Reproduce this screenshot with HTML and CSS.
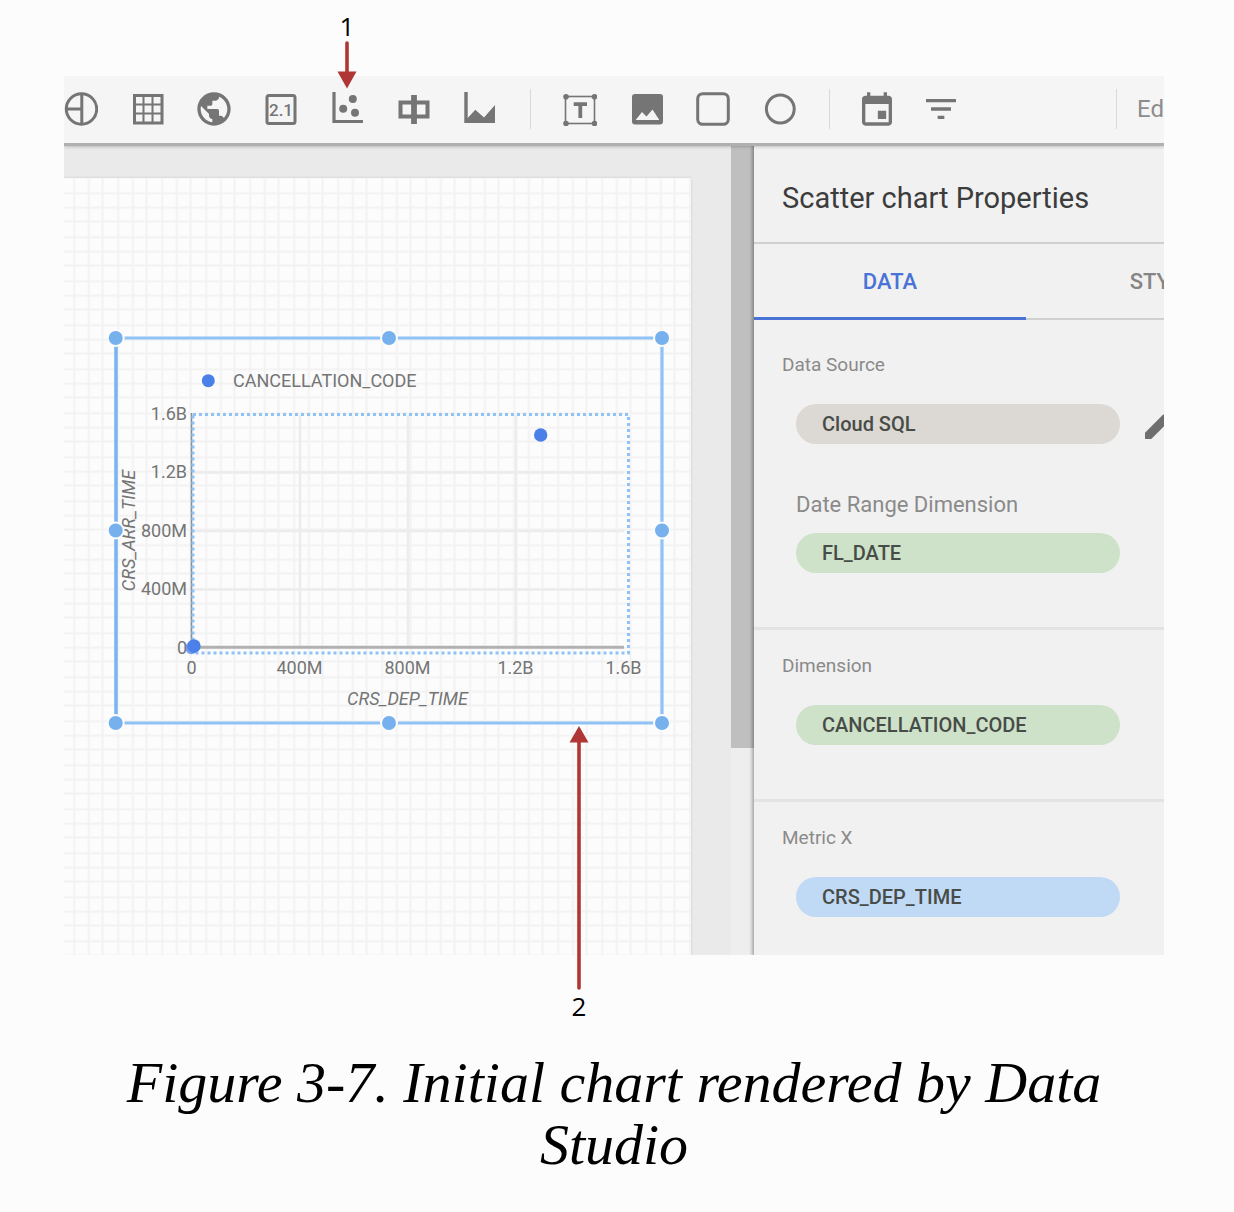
FILE: index.html
```html
<!DOCTYPE html>
<html lang="en">
<head>
<meta charset="utf-8">
<meta name="viewport" content="width=device-width, initial-scale=1">
<title>Figure 3-7. Initial chart rendered by Data Studio</title>
<link rel="stylesheet" href="styles.css">
</head>
<body>
<figure class="figure">
  <div class="app">
    <div class="toolbar" role="toolbar" aria-label="Insert">
      <div class="tools tools-charts">
        <button class="tool" type="button" aria-label="Pie chart"><svg viewBox="0 0 34 34"><g fill="none" stroke="currentColor" stroke-width="3"><circle cx="17.500" cy="17" r="15.200"/><path d="M17.800 2v30M3 17h14.500"/></g></svg></button>
        <button class="tool" type="button" aria-label="Table"><svg viewBox="0 0 34 34"><rect x="3.500" y="3.500" width="27.500" height="27.500" fill="none" stroke="currentColor" stroke-width="3"/><path d="M12.500 3v28M21.500 3v28M3 12.500h28M3 21.500h28" stroke="currentColor" stroke-width="2"/></svg></button>
        <button class="tool" type="button" aria-label="Geo map"><svg viewBox="1.800 1.800 20.400 20.400"><path fill="currentColor" d="M12 2C6.480 2 2 6.480 2 12s4.480 10 10 10 10-4.480 10-10S17.520 2 12 2zm-1 17.930c-3.950-.49-7-3.850-7-7.930 0-.62.08-1.210.21-1.790L9 15v1c0 1.100.9 2 2 2v1.930zm6.900-2.540c-.26-.81-1-1.390-1.900-1.390h-1v-3c0-.55-.45-1-1-1H8v-2h2c.55 0 1-.45 1-1V7h2c1.100 0 2-.9 2-2v-.41c2.930 1.190 5 4.060 5 7.410 0 2.080-.8 3.970-2.100 5.390z"/></svg></button>
        <button class="tool" type="button" aria-label="Scorecard"><svg viewBox="0 0 34 34"><rect x="3" y="3.500" width="28" height="28" rx="2" fill="none" stroke="currentColor" stroke-width="3"/><text class="score" x="17" y="24" text-anchor="middle">2.1</text></svg></button>
        <button class="tool" type="button" aria-label="Scatter chart"><svg viewBox="0 0 34 34"><path d="M4 0v29.500h29" fill="none" stroke="currentColor" stroke-width="3.200"/><g fill="currentColor"><circle cx="22.800" cy="7" r="4"/><circle cx="13.200" cy="16.800" r="4"/><circle cx="25" cy="20.800" r="4"/></g></svg></button>
        <button class="tool" type="button" aria-label="Bullet chart"><svg viewBox="0 0 34 34"><rect x="3.500" y="10.500" width="27" height="14" fill="none" stroke="currentColor" stroke-width="4"/><path d="M17 3v29" stroke="currentColor" stroke-width="5.800"/></svg></button>
        <button class="tool" type="button" aria-label="Area chart"><svg viewBox="0 0 34 34"><path fill="currentColor" d="M1.300 0h3.400v26l7.600-8.200 8.700 7.600L32 13v18H1.300z"/></svg></button>
      </div>
      <span class="divider"></span>
      <div class="tools tools-shapes">
        <button class="tool" type="button" aria-label="Text"><svg viewBox="0 0 34 34"><rect x="2.500" y="4.500" width="29" height="27" fill="none" stroke="currentColor" stroke-width="1.600"/><g fill="currentColor"><circle cx="3" cy="4.700" r="2.800"/><circle cx="31.500" cy="4.700" r="2.800"/><circle cx="3" cy="31.500" r="2.800"/><circle cx="31.500" cy="31.500" r="2.800"/></g><path d="M10.700 12.200H24M17.300 11v15" fill="none" stroke="currentColor" stroke-width="3.800"/></svg></button>
        <button class="tool" type="button" aria-label="Image"><svg viewBox="0 0 34 34"><path fill="currentColor" fill-rule="evenodd" d="M5 2h25q3 0 3 3v24.500q0 3-3 3H5q-3 0-3-3V5q0-3 3-3zM5.700 28H29.300L22.500 17.500 16.500 24.500 12 20z"/></svg></button>
        <button class="tool" type="button" aria-label="Rectangle"><svg viewBox="0 0 34 34"><rect x="1.700" y="1.700" width="30.600" height="30.600" rx="5" fill="none" stroke="currentColor" stroke-width="3"/></svg></button>
        <button class="tool" type="button" aria-label="Circle"><svg viewBox="0 0 34 34"><circle cx="17.300" cy="17" r="13.900" fill="none" stroke="currentColor" stroke-width="3"/></svg></button>
      </div>
      <span class="divider"></span>
      <div class="tools tools-filters">
        <button class="tool" type="button" aria-label="Date range"><svg viewBox="1.800 .8 20.400 20.400"><path fill="currentColor" d="M17.500 12h-5v5h5v-5zM16 1v2H8V1H6v2H5c-1.110 0-1.990.9-1.990 2L3 19c0 1.100.89 2 2 2h14c1.100 0 2-.9 2-2V5c0-1.100-.9-2-2-2h-1V1h-2zm3 18H5V8h14v11z"/></svg></button>
        <button class="tool" type="button" aria-label="Filter control"><svg viewBox="1.800 1.800 20.400 20.400"><path fill="currentColor" d="M10 18h4v-2h-4v2zM3 6v2h18V6H3zm3 7h12v-2H6v2z"/></svg></button>
      </div>
      <span class="divider divider-end"></span>
      <button class="edit-link" type="button">Edit</button>
    </div>

    <div class="workspace">
      <div class="canvas">
        <div class="sheet">
          <svg class="sheet-grid" aria-hidden="true">
            <defs><pattern id="grid" x="-4.500" y="0.500" width="44" height="44" patternUnits="userSpaceOnUse"><path d="M14.670 0v44M29.330 0v44M43 0v44M0 14.670h44M0 29.330h44M0 43h44" fill="none" stroke="#f2f2f2" stroke-width="2"/></pattern></defs>
            <rect width="100%" height="100%" fill="url(#grid)"/>
          </svg>
          <svg class="chart" viewBox="108 330 562 402" role="img" aria-label="Scatter chart of CRS_DEP_TIME and CRS_ARR_TIME">
            <g stroke="#ececec" stroke-width="2.400"><path d="M300 415v232M408 415v232M516 415v232M192 472.500h432M192 531h432M192 589.500h432"/></g>
            <path d="M191.500 413v235" stroke="#858b91" stroke-width="1.600"/>
            <path d="M192 647.300h432" stroke="#b1b1b1" stroke-width="3"/>
            <rect class="plot-frame" x="193" y="414.500" width="435.500" height="238.500"/>
            <g class="tick tick-y"><text x="187" y="420">1.6B</text><text x="187" y="478">1.2B</text><text x="187" y="537">800M</text><text x="187" y="595">400M</text><text x="187" y="654">0</text></g>
            <g class="tick tick-x"><text x="191.500" y="674">0</text><text x="299.500" y="674">400M</text><text x="407.500" y="674">800M</text><text x="515.500" y="674">1.2B</text><text x="623.500" y="674">1.6B</text></g>
            <text class="tick" x="233" y="387">CANCELLATION_CODE</text>
            <text class="tick axis" x="407.500" y="705">CRS_DEP_TIME</text>
            <text class="tick axis" transform="translate(135 530.500) rotate(-90)">CRS_ARR_TIME</text>
            <g fill="#4c80e9"><circle cx="208.300" cy="380.700" r="6.500"/><circle cx="540.700" cy="435" r="6.700"/><circle cx="194" cy="646" r="6.700"/><circle cx="191.500" cy="648" r="6.200" opacity=".75"/></g>
            <path d="M116 338v385" stroke="#7bb4f0" stroke-width="3.600"/>
            <path d="M116 338h546M116 723h546M662 338v385" stroke="#8fc2f5" stroke-width="3.200"/>
            <g class="handles"><circle cx="115.700" cy="338" r="8"/><circle cx="389" cy="338" r="8"/><circle cx="662" cy="338" r="8"/><circle cx="115.700" cy="530.500" r="8"/><circle cx="662" cy="530.500" r="8"/><circle cx="115.700" cy="723" r="8"/><circle cx="389" cy="723" r="8"/><circle cx="662" cy="723" r="8"/></g>
          </svg>
        </div>
        <div class="scroll-track"><div class="scroll-thumb"></div></div>
      </div>

      <aside class="panel">
        <h2 class="panel-title">Scatter chart Properties</h2>
        <div class="tabs" role="tablist">
          <button class="tab tab-active" type="button" role="tab" aria-selected="true">DATA</button>
          <button class="tab" type="button" role="tab" aria-selected="false">STYLE</button>
        </div>
        <section class="section section-source">
          <h3 class="label">Data Source</h3>
          <div class="field">
            <button class="pill pill-source" type="button">Cloud SQL</button>
            <button class="pencil" type="button" aria-label="Edit data source"><svg viewBox="0 0 24 24"><path fill="currentColor" d="M3 17.250V21h3.750L17.810 9.940l-3.750-3.750L3 17.250zM20.710 7.040a1 1 0 0 0 0-1.410l-2.340-2.340a1 1 0 0 0-1.410 0l-1.830 1.830 3.750 3.750 1.830-1.830z"/></svg></button>
          </div>
          <h4 class="sublabel">Date Range Dimension</h4>
          <div class="field"><button class="pill pill-dimension" type="button">FL_DATE</button></div>
        </section>
        <section class="section">
          <h3 class="label">Dimension</h3>
          <div class="field"><button class="pill pill-dimension" type="button">CANCELLATION_CODE</button></div>
        </section>
        <section class="section section-last">
          <h3 class="label">Metric X</h3>
          <div class="field"><button class="pill pill-metric" type="button">CRS_DEP_TIME</button></div>
        </section>
      </aside>
    </div>
  </div>

  <div class="callout callout-toolbar">
    <span>1</span>
    <svg width="20" height="48" viewBox="0 0 20 48" aria-hidden="true"><path d="M10 2v30" stroke="#b03535" stroke-width="3.600" stroke-linecap="round"/><path d="M.5 30.500h19L10 47.500z" fill="#b03535"/></svg>
  </div>
  <div class="callout callout-chart">
    <svg width="20" height="265" viewBox="0 0 20 265" aria-hidden="true"><path d="M10 16v246" stroke="#b03535" stroke-width="3.600" stroke-linecap="round"/><path d="M.5 16.500h19L10 0z" fill="#b03535"/></svg>
    <span>2</span>
  </div>

  <figcaption class="caption">Figure 3-7. Initial chart rendered by Data Studio</figcaption>
</figure>
</body>
</html>
```
FILE: styles.css
```css
* { box-sizing: border-box; }

body {
  margin: 0;
  background: #fcfcfc;
  color: #000;
  font-family: Roboto, "Liberation Sans", sans-serif;
}

button {
  margin: 0;
  padding: 0;
  border: 0;
  background: none;
  font: inherit;
  color: inherit;
  cursor: pointer;
}

h2, h3, h4 { margin: 0; font-weight: 400; }

.figure {
  position: relative;
  margin: 0;
  padding: 76px 70px 32px 64px;
}

.app {
  display: flex;
  flex-direction: column;
  overflow: hidden;
  background: #eaeaea;
}

/* Toolbar */
.toolbar {
  position: relative;
  z-index: 1;
  display: flex;
  align-items: center;
  height: 70px;
  padding-bottom: 1px;
  background: #f5f5f5;
  border-bottom: 3px solid #b0b0b0;
  box-shadow: 0 1px 3px rgba(0, 0, 0, 0.2);
  color: #757575;
}

.tools { display: flex; flex: none; justify-content: space-between; }
.tools-charts { width: 433px; }
.tools-shapes { width: 234px; }
.tools-filters { width: 98px; }

.tool { width: 34px; height: 34px; }
.tool svg { display: block; width: 34px; height: 34px; }

.score {
  font: 500 17px Roboto, "Liberation Sans", sans-serif;
  fill: currentColor;
}

.divider {
  flex: none;
  width: 1px;
  height: 40px;
  margin: 0 32px 0 33px;
  background: #d9d9d9;
}

.tools-shapes + .divider { margin: 0 30px 0 32px; }
.divider-end { margin: 0 20px 0 auto; }

.edit-link {
  flex: none;
  width: 27px;
  overflow: hidden;
  text-align: left;
  font-size: 24px;
  line-height: 28px;
  color: #8c8c8c;
}

/* Workspace */
.workspace { display: flex; }

.canvas {
  flex: 1;
  min-width: 0;
  display: flex;
}

.sheet {
  position: relative;
  flex: 1;
  min-width: 0;
  margin: 32px 40px 0 0;
  overflow: hidden;
  background: #fcfcfc;
  box-shadow: 0 0 3px rgba(0, 0, 0, 0.12);
}

.sheet-grid { display: block; position: absolute; inset: 0; width: 100%; height: 100%; }

.chart {
  position: absolute;
  left: 44px;
  top: 152px;
  width: 562px;
  height: 402px;
}

.tick { font-size: 18px; fill: #757575; }
.tick-y { text-anchor: end; }
.tick-x { text-anchor: middle; }
.axis { font-style: italic; text-anchor: middle; }

.plot-frame {
  fill: none;
  stroke: #8fc3f6;
  stroke-width: 3;
  stroke-dasharray: 3 3;
}

.handles { fill: #76b0ed; stroke: #fcfcfc; stroke-width: 2; }

.scroll-track {
  flex: none;
  width: 23px;
  background: #eeeeee;
}

.scroll-thumb { height: 602px; background: #bfbfbf; }

/* Properties panel */
.panel {
  flex: none;
  width: 410px;
  overflow: hidden;
  background: #f1f1f1;
  box-shadow: -1px 0 3px 1px rgba(0, 0, 0, 0.3);
}

.panel-title {
  padding: 36px 28px 28px;
  border-bottom: 2px solid #cfcfcf;
  font-size: 29px;
  line-height: 32px;
  color: #3c3c3c;
}

.tabs { display: flex; border-bottom: 2px solid #d0d0d0; }

.tab {
  flex: none;
  width: 272px;
  height: 76px;
  margin-bottom: -2px;
  padding-top: 2px;
  border-bottom: 3px solid transparent;
  font-size: 22px;
  font-weight: 500;
  color: #858585;
}

.tab-active { color: #4a73d6; border-bottom-color: #4a73d6; }

.section { padding: 24px 28px 54px; border-bottom: 3px solid #e3e3e3; }
.section-source { padding-top: 33px; }
.section-last { padding-bottom: 38px; border-bottom: 0; }

.label { margin-bottom: 27px; font-size: 19px; line-height: 24px; color: #8a8a8a; }

.sublabel {
  margin: 49px 14px 16px;
  font-size: 22px;
  line-height: 24px;
  color: #8a8a8a;
}

.field { display: flex; gap: 20px; padding-left: 14px; }

.pill {
  flex: none;
  width: 324px;
  height: 40px;
  padding: 0 26px;
  border-radius: 20px;
  text-align: left;
  font-size: 20px;
  font-weight: 500;
  color: #484c48;
}

.pill-source { background: #dcd8d3; }
.pill-dimension { background: #cde2c8; }
.pill-metric { background: #c0daf5; }

.pencil { flex: none; width: 40px; height: 40px; color: #6e6e6e; }
.pencil svg { display: block; width: 40px; height: 40px; }

/* Numbered annotations that point into the app */
.callout {
  position: absolute;
  z-index: 2;
  display: flex;
  flex-direction: column;
  align-items: center;
  gap: 2px;
  width: 20px;
  font: 26px/26px "Open Sans", "Liberation Sans", sans-serif;
}

.callout-toolbar { left: 337px; top: 13px; }
.callout-chart { left: 569px; top: 726px; }

.caption {
  margin-top: 97px;
  padding: 0 40px;
  text-align: center;
  font: italic 58px/62px "Liberation Serif", "Times New Roman", serif;
}
```
